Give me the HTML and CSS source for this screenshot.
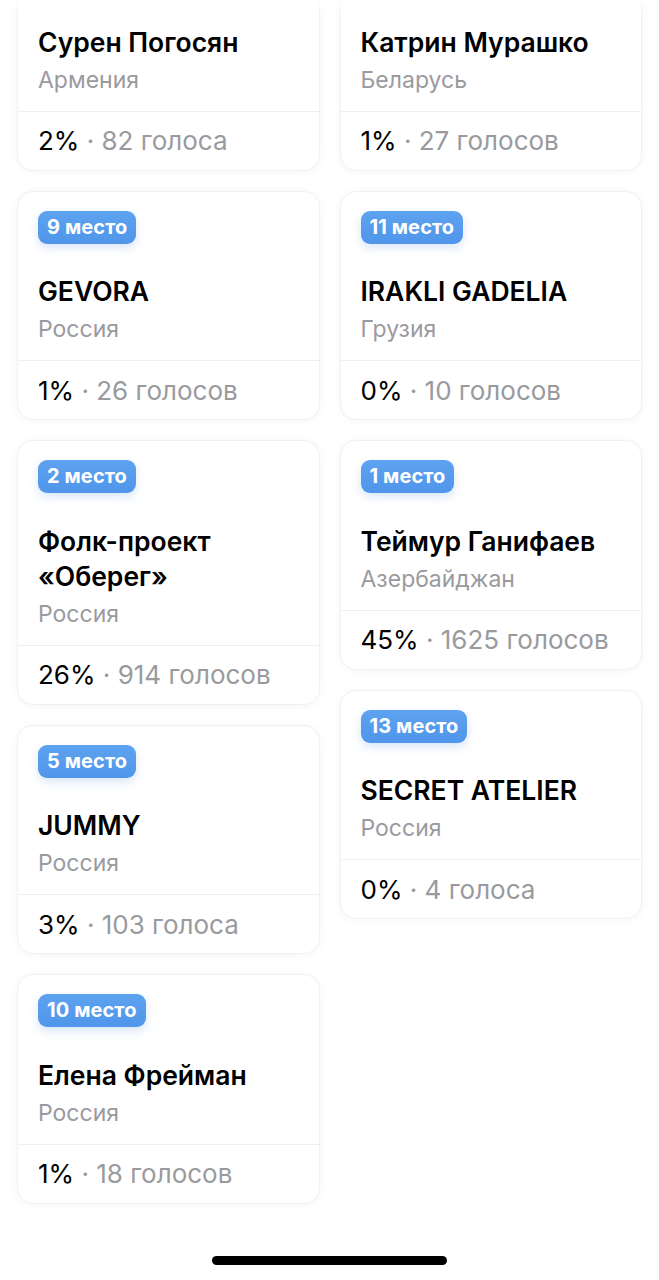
FILE: index.html
```html
<!DOCTYPE html>
<html lang="ru">
<head>
<meta charset="utf-8">
<title>Голосование</title>
<link rel="stylesheet" href="styles.css">
</head>
<body>
<div class="top-fade"></div>
<main class="grid">
  <div class="col">
    <article class="card card--cut">
      <div class="card-top">
        <div class="name">Сурен Погосян</div>
        <div class="country">Армения</div>
      </div>
      <div class="stats"><span class="pct">2%</span><span class="votes">&nbsp;·&nbsp;82 голоса</span></div>
    </article>
    <article class="card">
      <div class="card-top">
        <span class="badge">9 место</span>
        <div class="name">GEVORA</div>
        <div class="country">Россия</div>
      </div>
      <div class="stats"><span class="pct">1%</span><span class="votes">&nbsp;·&nbsp;26 голосов</span></div>
    </article>
    <article class="card">
      <div class="card-top">
        <span class="badge">2 место</span>
        <div class="name">Фолк-проект<br>«Оберег»</div>
        <div class="country">Россия</div>
      </div>
      <div class="stats"><span class="pct">26%</span><span class="votes">&nbsp;·&nbsp;914 голосов</span></div>
    </article>
    <article class="card">
      <div class="card-top">
        <span class="badge">5 место</span>
        <div class="name">JUMMY</div>
        <div class="country">Россия</div>
      </div>
      <div class="stats"><span class="pct">3%</span><span class="votes">&nbsp;·&nbsp;103 голоса</span></div>
    </article>
    <article class="card">
      <div class="card-top">
        <span class="badge">10 место</span>
        <div class="name">Елена Фрейман</div>
        <div class="country">Россия</div>
      </div>
      <div class="stats"><span class="pct">1%</span><span class="votes">&nbsp;·&nbsp;18 голосов</span></div>
    </article>
  </div>
  <div class="col">
    <article class="card card--cut">
      <div class="card-top">
        <div class="name">Катрин Мурашко</div>
        <div class="country">Беларусь</div>
      </div>
      <div class="stats"><span class="pct">1%</span><span class="votes">&nbsp;·&nbsp;27 голосов</span></div>
    </article>
    <article class="card">
      <div class="card-top">
        <span class="badge">11 место</span>
        <div class="name">IRAKLI GADELIA</div>
        <div class="country">Грузия</div>
      </div>
      <div class="stats"><span class="pct">0%</span><span class="votes">&nbsp;·&nbsp;10 голосов</span></div>
    </article>
    <article class="card">
      <div class="card-top">
        <span class="badge">1 место</span>
        <div class="name">Теймур Ганифаев</div>
        <div class="country">Азербайджан</div>
      </div>
      <div class="stats"><span class="pct">45%</span><span class="votes">&nbsp;·&nbsp;1625 голосов</span></div>
    </article>
    <article class="card">
      <div class="card-top">
        <span class="badge">13 место</span>
        <div class="name">SECRET ATELIER</div>
        <div class="country">Россия</div>
      </div>
      <div class="stats"><span class="pct">0%</span><span class="votes">&nbsp;·&nbsp;4 голоса</span></div>
    </article>
  </div>
</main>
<div class="home-indicator"></div>
</body>
</html>
```
FILE: styles.css
```css
* { box-sizing: border-box; }
html, body { margin: 0; padding: 0; background: #ffffff; }
body {
  font-family: Inter, "Noto Sans", "Liberation Sans", sans-serif;
  color: #000;
  height: 1280px;
  overflow: hidden;
  position: relative;
}
.top-fade {
  position: absolute;
  left: 0; right: 0; top: 0;
  height: 14px;
  background: linear-gradient(#ffffff, rgba(255,255,255,0));
  z-index: 2;
}
.grid {
  display: grid;
  grid-template-columns: 1fr 1fr;
  column-gap: 20px;
  padding: 0 17px;
  margin-top: -59px;
  align-items: start;
}
.col {
  display: flex;
  flex-direction: column;
  gap: 20px;
}
.card {
  background: #fff;
  border-radius: 16px;
  border: 1px solid #f1f1f3;
  box-shadow: 0 1px 8px rgba(0, 0, 0, 0.045);
  overflow: hidden;
}
.card-top {
  padding: 19px 20px 13px;
}
.card--cut .card-top {
  padding-top: 82.5px;
}
.badge {
  display: inline-block;
  height: 33px;
  line-height: 33px;
  padding: 0 9px;
  border-radius: 9px;
  background: linear-gradient(180deg, #5ea3f0 0%, #4f95ea 100%);
  color: #fff;
  font-weight: 700;
  font-size: 20px;
  letter-spacing: 0.1px;
  box-shadow: 0 4px 10px rgba(80, 140, 220, 0.22);
}
.badge + .name { margin-top: 30.5px; }
.name {
  font-size: 26.5px;
  line-height: 35px;
  font-weight: 600;
  letter-spacing: 0;
}
.country {
  margin-top: 3px;
  font-size: 23px;
  line-height: 35px;
  color: #9a9a9e;
}
.stats {
  border-top: 1px solid #efeff1;
  height: 59px;
  display: flex;
  align-items: center;
  padding: 0 20px;
  font-size: 26px;
  white-space: nowrap;
}
.pct { color: #000; }
.votes { color: #999a9e; }
.home-indicator {
  position: absolute;
  left: 212px;
  width: 235px;
  top: 1256px;
  height: 9px;
  border-radius: 5px;
  background: #000;
}
```
